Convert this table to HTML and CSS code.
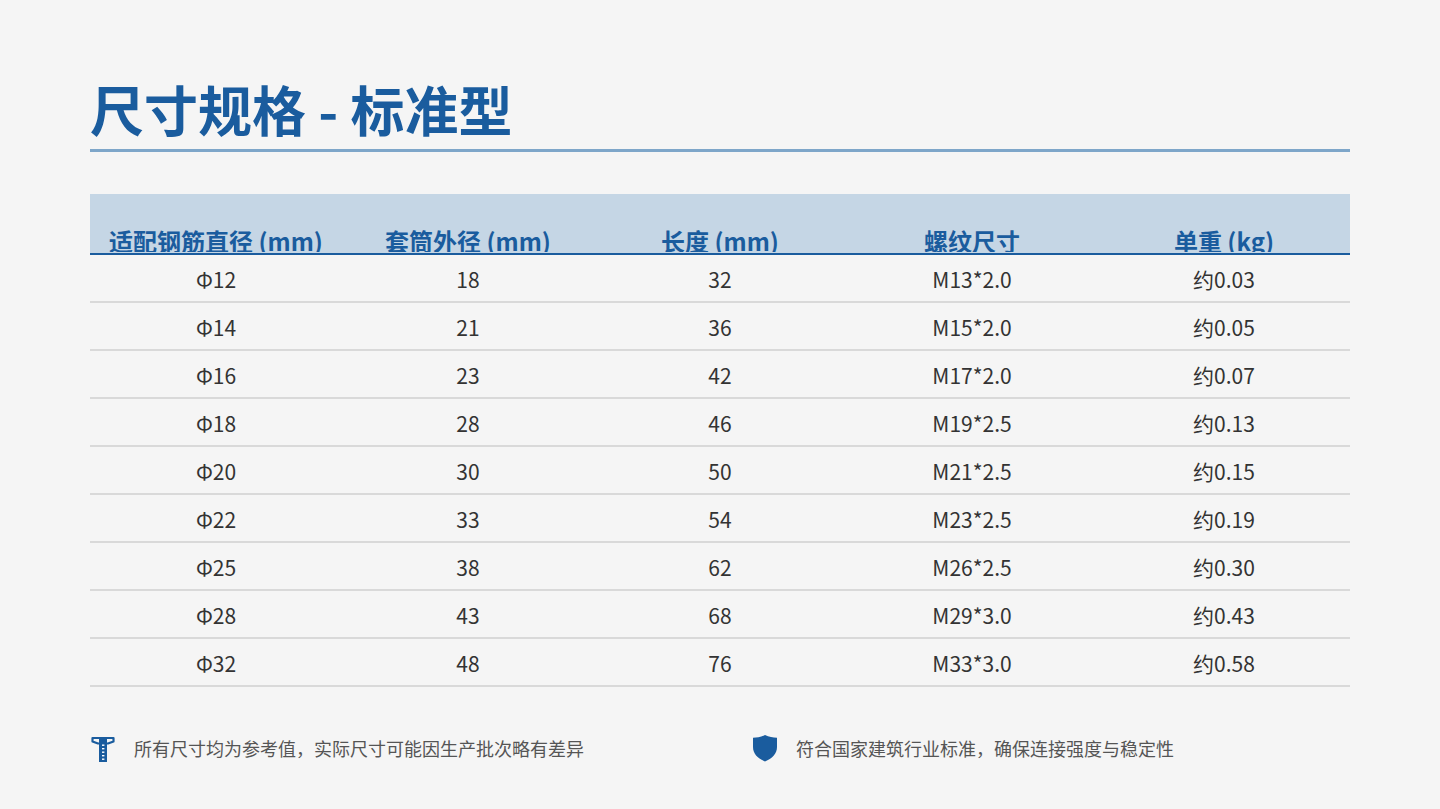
FILE: index.html
```html
<!DOCTYPE html>
<html lang="zh-CN">
<head>
<meta charset="utf-8">
<title>尺寸规格 - 标准型</title>
<link rel="stylesheet" href="styles.css">
</head>
<body>
<main class="page">
  <h1 class="title">尺寸规格 - 标准型</h1>
  <div class="rule"></div>

  <table class="spec">
    <thead>
      <tr>
        <th><span>适配钢筋直径 (mm)</span></th>
        <th><span>套筒外径 (mm)</span></th>
        <th><span>长度 (mm)</span></th>
        <th><span>螺纹尺寸</span></th>
        <th><span>单重 (kg)</span></th>
      </tr>
    </thead>
    <tbody>
      <tr><td>Φ12</td><td>18</td><td>32</td><td>M13*2.0</td><td>约0.03</td></tr>
      <tr><td>Φ14</td><td>21</td><td>36</td><td>M15*2.0</td><td>约0.05</td></tr>
      <tr><td>Φ16</td><td>23</td><td>42</td><td>M17*2.0</td><td>约0.07</td></tr>
      <tr><td>Φ18</td><td>28</td><td>46</td><td>M19*2.5</td><td>约0.13</td></tr>
      <tr><td>Φ20</td><td>30</td><td>50</td><td>M21*2.5</td><td>约0.15</td></tr>
      <tr><td>Φ22</td><td>33</td><td>54</td><td>M23*2.5</td><td>约0.19</td></tr>
      <tr><td>Φ25</td><td>38</td><td>62</td><td>M26*2.5</td><td>约0.30</td></tr>
      <tr><td>Φ28</td><td>43</td><td>68</td><td>M29*3.0</td><td>约0.43</td></tr>
      <tr><td>Φ32</td><td>48</td><td>76</td><td>M33*3.0</td><td>约0.58</td></tr>
    </tbody>
  </table>

  <footer class="notes">
    <div class="note">
      <svg class="icon" viewBox="0 0 26 28" width="26" height="28" aria-hidden="true">
        <path d="M2.5 4 H23.5 V7.5 L18 9.5 H8 L2.5 7.5 Z" fill="none" stroke="#1a5c9e" stroke-width="2.2" stroke-linejoin="round"/>
        <rect x="9" y="3" width="8" height="25" fill="#1a5c9e"/>
        <rect x="12" y="10.5" width="2.4" height="1.4" fill="#fff"/>
        <rect x="12" y="14" width="2.4" height="1.4" fill="#fff"/>
        <rect x="12" y="17.5" width="2.4" height="1.4" fill="#fff"/>
        <rect x="12" y="21" width="2.4" height="1.4" fill="#fff"/>
        <rect x="12" y="24.5" width="2.4" height="1.4" fill="#fff"/>
      </svg>
      <span>所有尺寸均为参考值，实际尺寸可能因生产批次略有差异</span>
    </div>
    <div class="note">
      <svg class="icon" viewBox="0 0 26 28" width="26" height="28" aria-hidden="true">
        <path d="M13 1 C17 3 21 3.6 25 3.8 V13 C25 20 20 24.5 13 27.5 C6 24.5 1 20 1 13 V3.8 C5 3.6 9 3 13 1 Z" fill="#1a5c9e"/>
      </svg>
      <span>符合国家建筑行业标准，确保连接强度与稳定性</span>
    </div>
  </footer>
</main>
</body>
</html>
```

FILE: styles.css
```css
* { box-sizing: border-box; }

html, body {
  margin: 0;
  padding: 0;
  background: #f5f5f5;
}

body {
  font-family: "Noto Sans CJK SC", "Noto Sans", sans-serif;
  color: #333;
}

.page {
  width: 1440px;
  height: 809px;
  padding: 72px 90px 0 90px;
}

.title {
  margin: 0;
  font-size: 54px;
  line-height: 74px;
  font-weight: 700;
  color: #1a5c9e;
  letter-spacing: 0;
}

.rule {
  margin-top: 3px;
  height: 3px;
  background: #7ea6c9;
}

.spec {
  margin-top: 42px;
  width: 100%;
  border-collapse: collapse;
  table-layout: fixed;
}

.spec th {
  height: 60px;
  padding: 0;
  background: #c5d6e5;
  border-bottom: 2px solid #1a5c9e;
  vertical-align: top;
  overflow: hidden;
  font-size: 24px;
  font-weight: 700;
  color: #1a5c9e;
}

.spec th span {
  display: block;
  height: 58px;
  padding-top: 33px;
  line-height: 28px;
  overflow: hidden;
  white-space: nowrap;
}

.spec td {
  height: 48px;
  padding: 2px 0 0 0;
  text-align: center;
  font-size: 21px;
  color: #333;
  border-bottom: 2px solid #d9d9d9;
}

.notes {
  margin-top: 47px;
  display: grid;
  grid-template-columns: 602px 1fr;
  column-gap: 60px;
}

.note {
  display: flex;
  align-items: center;
  gap: 18px;
  font-size: 18px;
  color: #555;
}

.icon {
  flex: none;
  display: block;
}
```
